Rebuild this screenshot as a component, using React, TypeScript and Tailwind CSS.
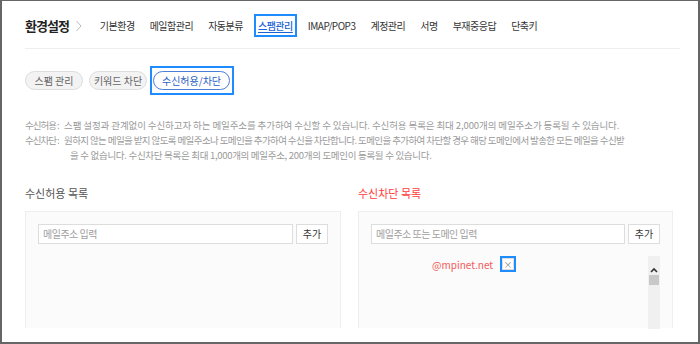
import React from "react"

const font = { fontFamily: '"Noto Sans CJK KR", "Noto Sans", sans-serif' }

const navItems = ["기본환경", "메일함관리", "자동분류", "스팸관리", "IMAP/POP3", "계정관리", "서명", "부재중응답", "단축키"]

const Scrollbar = () => (
	<div className="w-[12px] h-full bg-[#f0f0f0] flex flex-col items-center">
		<svg width="10" height="8" viewBox="0 0 10 8" className="mt-[10px]">
			<path d="M2 6 L5 3 L8 6" fill="none" stroke="#333" strokeWidth="1.6" />
		</svg>
		<div className="w-[10px] h-[10px] bg-[#c8c8c8] mt-[1px]" />
	</div>
)

const ListBox = ({ placeholder, children }: { placeholder: string; children?: React.ReactNode }) => (
	<div className="h-[117px] bg-[#fbfbfb] border border-[#eeeeee] border-b-0 pt-[12px] px-[12px]">
		<div className="flex gap-[3px]">
			<div className="flex-1 h-[20px] bg-white border border-[#dddddd] flex items-center px-[4px] text-[10px] text-[#a0a0a0] tracking-[-0.5px]">
				{placeholder}
			</div>
			<div className="w-[32px] h-[20px] bg-white border border-[#dddddd] flex items-center justify-center text-[10px] text-[#333]">
				추가
			</div>
		</div>
		{children}
	</div>
)

export default function App() {
	return (
		<div className="w-[700px] h-[344px] bg-white border-[2px] border-t border-[#666666] overflow-hidden" style={font}>
			<div className="pl-[23px] pr-[18px]">
				{/* top nav */}
				<div className="flex items-center h-[48px] pt-[2px] border-b border-[#eeeeee]">
					<span className="text-[13px] font-bold text-[#222] tracking-[-1px]">환경설정</span>
					<svg width="8" height="12" viewBox="0 0 8 12" className="ml-[6px] mr-[17px]">
						<path d="M1.5 1 L6 6 L1.5 11" fill="none" stroke="#bbbbbb" strokeWidth="1" />
					</svg>
					<div className="flex items-center gap-[15px] text-[10px] tracking-[-0.5px] text-[#333]">
						{navItems.map((n) =>
							n === "스팸관리" ? (
								<span key={n} className="relative text-[#1a63d6] underline underline-offset-2 font-medium">
									{n}
									<span className="absolute -left-[4px] -right-[4px] -top-[4px] -bottom-[4px] border-[2px] border-[#1e8cff]" />
								</span>
							) : (
								<span key={n}>{n}</span>
							),
						)}
					</div>
				</div>

				{/* sub tabs */}
				<div className="flex items-center gap-[6px] mt-[22px]">
					<div className="h-[19px] w-[58px] rounded-full bg-[#f3f3f3] border border-[#dddddd] flex items-center justify-center text-[10px] text-[#666]">
						스팸 관리
					</div>
					<div className="h-[19px] w-[58px] rounded-full bg-[#f3f3f3] border border-[#dddddd] flex items-center justify-center text-[10px] text-[#666]">
						키워드 차단
					</div>
					<div className="relative h-[19px] w-[77px] rounded-full bg-white border border-[#4a7fd8] flex items-center justify-center text-[10px] text-[#2a5fc4]">
						수신허용/차단
						<span className="absolute -left-[4px] -right-[5px] -top-[6px] -bottom-[6px] border-[2px] border-[#1e8cff]" />
					</div>
				</div>

				{/* description */}
				<div className="mt-[28px] text-[9.5px] leading-[15px] text-[#9a9a9a] whitespace-nowrap">
					<div className="flex items-baseline">
						<span className="w-[39px] shrink-0 tracking-[-1px]">수신허용 :</span>
						<span className="tracking-[-0.1px]">스팸 설정과 관계없이 수신하고자 하는 메일주소를 추가하여 수신할 수 있습니다. 수신허용 목록은 최대 2,000개의 메일주소가 등록될 수 있습니다.</span>
					</div>
					<div className="flex items-baseline">
						<span className="w-[39px] shrink-0 tracking-[-1px]">수신차단 :</span>
						<span className="tracking-[-0.6px]">원하지 않는 메일을 받지 않도록 메일주소나 도메인을 추가하여 수신을 차단합니다. 도메인을 추가하여 차단할 경우 해당 도메인에서 발송한 모든 메일을 수신받</span>
					</div>
					<div className="pl-[45px] tracking-[-0.3px]">을 수 없습니다. 수신차단 목록은 최대 1,000개의 메일주소, 200개의 도메인이 등록될 수 있습니다.</div>
				</div>

				{/* lists */}
				<div className="flex gap-[17px] mt-[22px]">
					<div className="w-[316px]">
						<div className="text-[11px] text-[#555] mb-[9px]">수신허용 목록</div>
						<ListBox placeholder="메일주소 입력" />
					</div>
					<div className="w-[315px]">
						<div className="text-[11px] text-[#ff3b3b] mb-[9px]">수신차단 목록</div>
						<ListBox placeholder="메일주소 또는 도메인 입력">
							<div className="flex mt-[12px] h-[73px]">
								<div className="flex-1 pl-[61px] pt-[1px]">
									<div className="flex items-center">
										<span className="text-[10px] text-[#f25a5a]">@mpinet.net</span>
										<span className="relative ml-[9px] w-[12px] h-[12px] bg-white border border-[#dddddd] flex items-center justify-center text-[9px] text-[#888] leading-none">
											×
											<span className="absolute -left-[3px] -right-[3px] -top-[3px] -bottom-[3px] border-[2px] border-[#1e8cff]" />
										</span>
									</div>
								</div>
								<Scrollbar />
							</div>
						</ListBox>
					</div>
				</div>
			</div>
		</div>
	)
}
